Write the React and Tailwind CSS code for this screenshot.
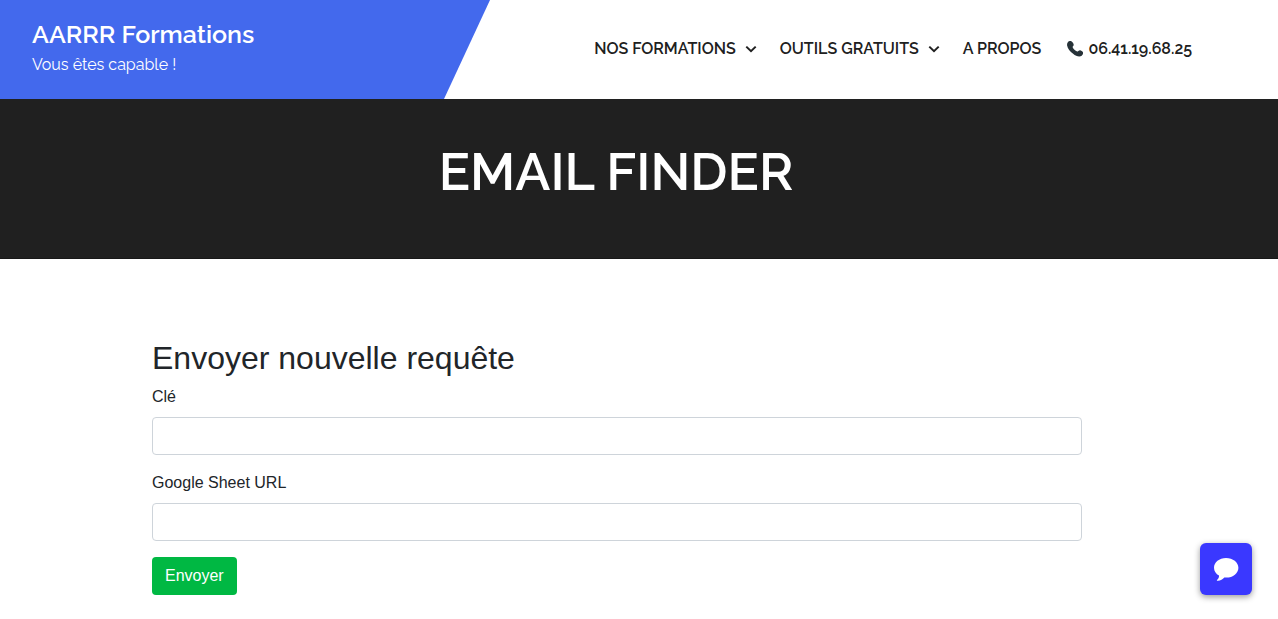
const navItems = [
  { label: "NOS FORMATIONS", menu: true },
  { label: "OUTILS GRATUITS", menu: true },
  { label: "A PROPOS" },
  { label: "06.41.19.68.25", phone: true },
];

function Chevron() {
  return (
    <svg className="h-3 w-3" viewBox="0 0 12 12" fill="none" stroke="currentColor" strokeWidth="2" aria-hidden="true">
      <path d="M1.3 3.6 6 8.2l4.7-4.6" />
    </svg>
  );
}

function Phone() {
  return (
    <svg className="h-4 w-4" viewBox="0 0 16 16" fill="#263238" aria-hidden="true">
      <path d="M1 1C2-.1 3.700-.4 4.700.4c1.100.8 2 2.200 2 3.300 0 1-.8 1.400-1 2-.3.8 1 2.400 2 3.300 1.100.9 2.300 1.700 3.100 1.400.8-.3 1.200-1.200 2.200-1.100 1.100.100 2.400.9 3 2 .6 1.200-.2 2.600-1.300 3.400-2.200 1.600-5.700.5-8.600-2C3 10.500.6 7.200.1 4.400-.1 3.100.2 1.900 1 1Z" />
    </svg>
  );
}

function Field({ id, label }) {
  return (
    <div className="mb-4">
      <label htmlFor={id} className="mb-2 block">{label}</label>
      <input id={id} type="text" className="block h-[38px] w-full rounded border border-[#ced4da] bg-white px-3 outline-none focus:border-[#80bdff]" />
    </div>
  );
}

export default function App() {
  return (
    <div className="bg-white font-['Liberation_Sans',Arial,sans-serif] text-base text-[#212529]">
      <header className="flex h-[99px] items-stretch font-['Raleway','Lato',sans-serif]">
        <div className="w-[490px] shrink-0 bg-[#4369ed] pt-[18px] pl-8 text-white [clip-path:polygon(0_0,100%_0,calc(100%-46px)_100%,0_100%)]">
          <a href="#" className="block text-[25px] leading-8 font-semibold">AARRR Formations</a>
          <p className="mt-[3px] text-base leading-6">Vous êtes capable !</p>
        </div>
        <nav className="flex flex-1 items-center justify-end gap-[23px] pr-[86px] pb-0.5 font-semibold whitespace-nowrap text-[#202020]">
          {navItems.map((item) => (
            <a key={item.label} href="#" className="flex items-center gap-[9px]">
              {item.phone ? (
                <span className="flex items-center gap-[5px] pl-[3px]"><Phone />{item.label}</span>
              ) : (
                item.label
              )}
              {item.menu && <Chevron />}
            </a>
          ))}
        </nav>
      </header>
      <main>
        <div className="h-40 border-b border-[#181818] bg-[#202020] pt-[41px] pr-[46px] text-center text-white">
          <h1 className="font-['Raleway','Lato',sans-serif] text-[52px] leading-[64px] font-semibold">EMAIL FINDER</h1>
        </div>
        <div className="pt-20 pr-11 pb-6">
          <form className="mx-auto max-w-[930px]" onSubmit={(e) => e.preventDefault()}>
            <h2 className="mb-2 text-[32px] leading-[38px]">Envoyer nouvelle requête</h2>
            <Field id="key" label="Clé" />
            <Field id="sheet" label="Google Sheet URL" />
            <button type="submit" className="h-[38px] rounded bg-[#00b843] px-[13px] text-white">Envoyer</button>
          </form>
        </div>
      </main>
      <button type="button" aria-label="Chat" className="fixed right-[26px] bottom-6 flex h-[52px] w-[52px] items-center justify-center rounded-md bg-[#3a38ff] shadow-[0_2px_6px_rgba(0,0,0,0.4)]">
        <svg className="h-6 w-[26px]" viewBox="0 0 26 24" fill="#fff" aria-hidden="true">
          <path d="M13 .9C6.300.9 1 5.200 1 10.700c0 3.400 2 6.200 5 7.800.2 1.800-.6 3.200-2 4.400-.3.3-.1.8.3.8 3 .2 5.300-1.200 7-3.200.6.100 1.200.100 1.900.100 6.900 0 12.200-4.400 12.200-9.900S19.900.9 13 .9Z" />
        </svg>
      </button>
    </div>
  );
}
